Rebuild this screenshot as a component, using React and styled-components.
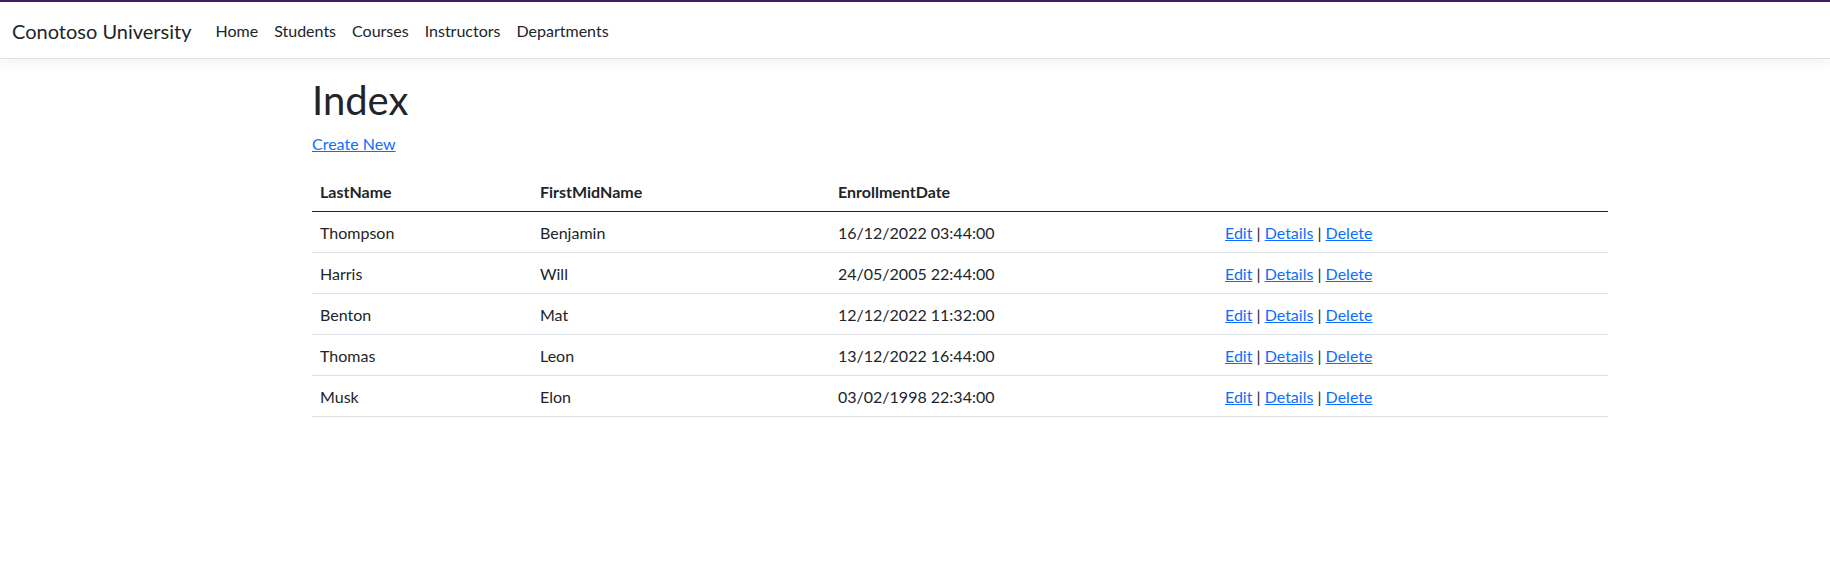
import styled, { createGlobalStyle } from "styled-components";

const GlobalStyle = createGlobalStyle`
  body {
    margin: 0;
    font-family: "Segoe UI", Lato, "Open Sans", sans-serif;
    font-size: 16px;
    line-height: 1.5;
    color: #212529;
    background: #fff;
  }
`;

const Header = styled.header`
  border-top: 2px solid #3b1f67;
`;

const Navbar = styled.nav`
  display: flex;
  align-items: center;
  padding: 8px 12px;
  background-color: #fff;
  border-bottom: 1px solid #dee2e6;
  box-shadow: 0 4px 12px rgba(0, 0, 0, 0.05);
  margin-bottom: 16px;
`;

const Brand = styled.a`
  font-size: 20px;
  line-height: 30px;
  padding: 6px 0 4px;
  margin-right: 16px;
  color: #212529;
  text-decoration: none;
`;

const NavList = styled.ul`
  display: flex;
  list-style: none;
  margin: 0;
  padding: 0;
`;

const NavLink = styled.a`
  display: block;
  padding: 9px 8px 7px;
  color: #212529;
  text-decoration: none;
`;

const Main = styled.main`
  width: 1296px;
  margin-left: 312px;
`;

const Title = styled.h1`
  font-size: 40px;
  font-weight: 400;
  line-height: 1.2;
  margin: 0 0 8px;
  padding-top: 1px;
`;

const Para = styled.p`
  margin: 0 0 15px;
`;

const Link = styled.a`
  color: #0d6efd;
  text-decoration: underline;
`;

const Table = styled.table`
  width: 100%;
  border-collapse: collapse;
  margin-bottom: 16px;
  table-layout: fixed;
`;

const Th = styled.th`
  width: ${(p) => p.$w}px;
  text-align: left;
  font-weight: 700;
  padding: 9px 8px 7px;
  border-bottom: 1px solid #212529;
`;

const Td = styled.td`
  padding: 9px 8px 7px;
  border-bottom: 1px solid #dee2e6;
`;

const Sep = styled.span`
  color: #212529;
`;

const students = [
  ["Thompson", "Benjamin", "16/12/2022 03:44:00"],
  ["Harris", "Will", "24/05/2005 22:44:00"],
  ["Benton", "Mat", "12/12/2022 11:32:00"],
  ["Thomas", "Leon", "13/12/2022 16:44:00"],
  ["Musk", "Elon", "03/02/1998 22:34:00"],
];

const App = () => {
  return (
    <>
      <GlobalStyle />
      <Header>
        <Navbar>
          <Brand href="#">Conotoso University</Brand>
          <NavList>
            {["Home", "Students", "Courses", "Instructors", "Departments"].map((n) => (
              <li key={n}>
                <NavLink href="#">{n}</NavLink>
              </li>
            ))}
          </NavList>
        </Navbar>
      </Header>
      <Main>
        <Title>Index</Title>
        <Para>
          <Link href="#">Create New</Link>
        </Para>
        <Table>
          <thead>
            <tr>
              <Th $w={204}>LastName</Th>
              <Th $w={282}>FirstMidName</Th>
              <Th $w={371}>EnrollmentDate</Th>
              <Th $w={375}></Th>
            </tr>
          </thead>
          <tbody>
            {students.map(([last, first, date]) => (
              <tr key={last}>
                <Td>{last}</Td>
                <Td>{first}</Td>
                <Td>{date}</Td>
                <Td>
                  <Link href="#">Edit</Link> <Sep>|</Sep> <Link href="#">Details</Link>{" "}
                  <Sep>|</Sep> <Link href="#">Delete</Link>
                </Td>
              </tr>
            ))}
          </tbody>
        </Table>
      </Main>
    </>
  );
};

export default App;
